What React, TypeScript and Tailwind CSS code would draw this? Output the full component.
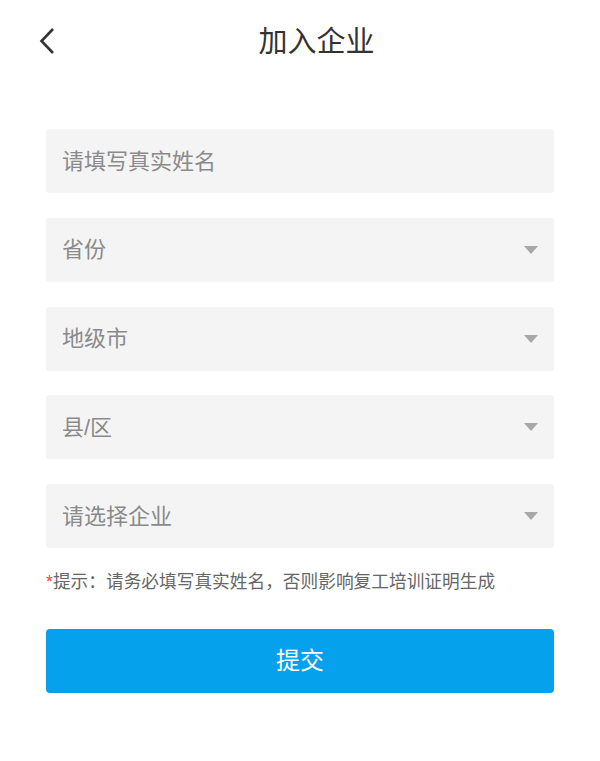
const fields = [
  { label: "请填写真实姓名", select: false },
  { label: "省份", select: true },
  { label: "地级市", select: true },
  { label: "县/区", select: true },
  { label: "请选择企业", select: true },
];

export default function App() {
  return (
    <div
      className="min-h-[761px] w-[600px] bg-white"
      style={{ fontFamily: '"Liberation Sans", "Noto Sans CJK SC", sans-serif' }}
    >
      <header className="relative flex h-[84px] items-center justify-center">
        <button className="absolute left-[39px] top-[27px]">
          <svg width="16" height="28" viewBox="0 0 16 28" fill="none">
            <path d="M14 2 L2.5 14 L14 26" stroke="#333" strokeWidth="2.6" />
          </svg>
        </button>
        <h1 className="ml-[33px] text-[29px] leading-none text-[#333]">加入企业</h1>
      </header>

      <div className="mx-[46px] mt-[45px] flex flex-col gap-[24.75px]">
        {fields.map((f) => (
          <div
            key={f.label}
            className="flex h-[64px] items-center justify-between rounded-[3px] bg-[#f4f4f4] pl-[16px] pr-[16px]"
          >
            <span className="text-[22px] text-[#8a8a8a]">{f.label}</span>
            {f.select && (
              <svg width="14" height="8" viewBox="0 0 14 8">
                <path d="M0 0 H14 L7 8 Z" fill="#a8a8a8" />
              </svg>
            )}
          </div>
        ))}
      </div>

      <p className="mx-[46px] mt-[22px] text-[17.7px] leading-[24px] text-[#666]">
        <span className="text-[#f04a3c]">*</span>提示：请务必填写真实姓名，否则影响复工培训证明生成
      </p>

      <button className="mx-[46px] mt-[35px] flex h-[64px] w-[508px] items-center justify-center rounded-[4px] bg-[#06a1ec] text-[24px] text-white">
        提交
      </button>
    </div>
  );
}
